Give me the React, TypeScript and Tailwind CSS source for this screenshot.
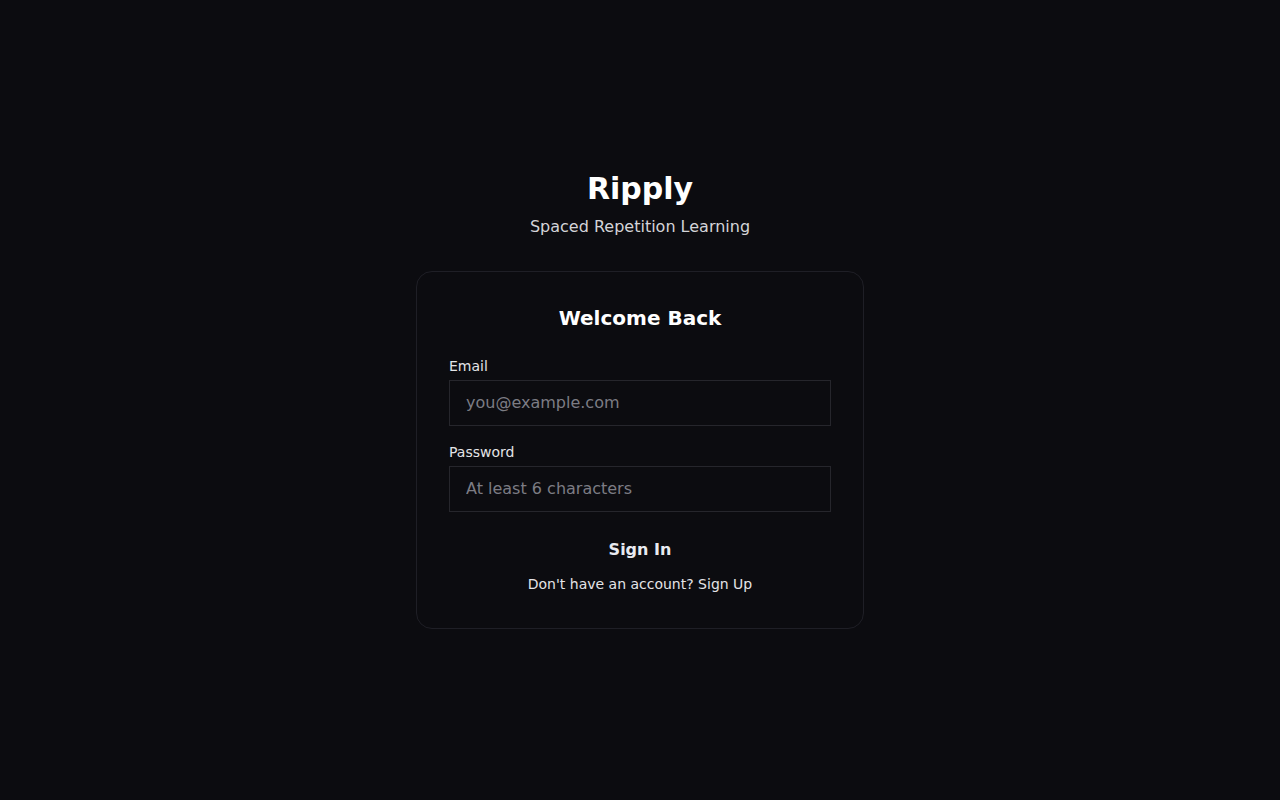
export default function App() {
  return (
    <div
      className="min-h-screen flex items-center justify-center bg-[#0c0c10]"
      style={{ fontFamily: '"DejaVu Sans", sans-serif' }}
    >
      <div className="w-[448px]">
        {/* Brand */}
        <div className="text-center mb-8">
          <h1 className="text-3xl font-bold text-white leading-9">Ripply</h1>
          <p className="mt-2 text-base leading-6 text-[#d4d4d8]">Spaced Repetition Learning</p>
        </div>

        {/* Card */}
        <div className="rounded-2xl border border-[#1f1f26] bg-[#0c0c10] px-8 pt-8 pb-[34px]">
          <h2 className="text-xl leading-7 font-bold text-white text-center mb-6">Welcome Back</h2>

          <form className="space-y-4" onSubmit={(e) => e.preventDefault()}>
            <div>
              <label className="block text-sm leading-5 text-[#e4e4e7] mb-1">Email</label>
              <input
                type="email"
                placeholder="you@example.com"
                className="w-full h-[46px] px-4 pb-[2px] bg-transparent border border-[#26262c] text-base text-white placeholder:text-[#7c7c84] outline-none"
              />
            </div>
            <div>
              <label className="block text-sm leading-5 text-[#e4e4e7] mb-1">Password</label>
              <input
                type="password"
                placeholder="At least 6 characters"
                className="w-full h-[46px] px-4 pb-[2px] bg-transparent border border-[#26262c] text-base text-white placeholder:text-[#7c7c84] outline-none"
              />
            </div>
            <button
              type="submit"
              className="w-full h-10 pt-[4px] text-base font-bold text-[#e8eaf0] bg-transparent"
            >
              Sign In
            </button>
          </form>

          <p className="mt-1.5 text-sm leading-5 text-center text-[#e4e4e7]">
            Don't have an account? Sign Up
          </p>
        </div>
      </div>
    </div>
  )
}
